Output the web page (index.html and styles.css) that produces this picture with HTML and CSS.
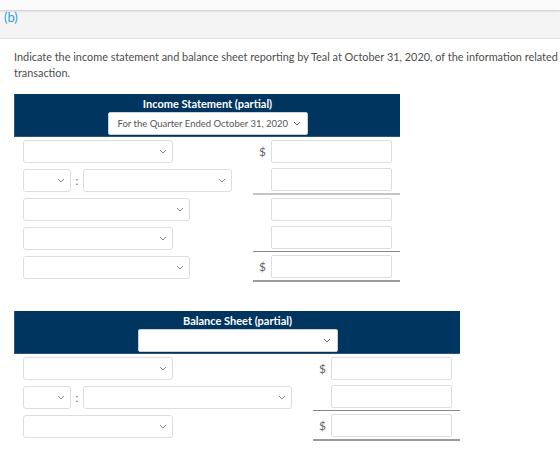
FILE: index.html
```html
<!DOCTYPE html>
<html lang="en">
<head>
    <meta charset="UTF-8">
    <meta name="viewport" content="width=device-width, initial-scale=1.0">
    <title>Part (b)</title>
    <link rel="stylesheet" href="styles.css">
</head>
<body>
    <div class="topbar"></div>
    <div class="part-head">(b)</div>

    <div class="content">
        <p class="question">Indicate the income statement and balance sheet reporting by Teal at October 31, 2020, of the information related to the transaction.</p>

        <!-- income statement -->
        <div class="sheet sheet-income">
            <div class="sheet-head">
                <div class="sheet-title">Income Statement (partial)</div>
                <div class="dd dd-period">
                    <span class="dd-text">For the Quarter Ended October 31, 2020</span>
                    <svg class="chev" width="8" height="5" viewBox="0 0 8 5"><path d="M1 1 L4 4 L7 1" fill="none" stroke="#666" stroke-width="1"/></svg>
                </div>
            </div>

            <div class="row">
                <div class="left">
                    <div class="dd w150"><svg class="chev" width="8" height="5" viewBox="0 0 8 5"><path d="M1 1 L4 4 L7 1" fill="none" stroke="#888" stroke-width="1"/></svg></div>
                </div>
                <div class="amt"><span class="cur">$</span><input type="text" class="num"></div>
            </div>

            <div class="row">
                <div class="left">
                    <div class="dd w48"><svg class="chev" width="8" height="5" viewBox="0 0 8 5"><path d="M1 1 L4 4 L7 1" fill="none" stroke="#888" stroke-width="1"/></svg></div>
                    <span class="colon">:</span>
                    <div class="dd w149"><svg class="chev" width="8" height="5" viewBox="0 0 8 5"><path d="M1 1 L4 4 L7 1" fill="none" stroke="#888" stroke-width="1"/></svg></div>
                </div>
                <div class="amt line-double light"><input type="text" class="num"></div>
            </div>

            <div class="row">
                <div class="left">
                    <div class="dd w167"><svg class="chev" width="8" height="5" viewBox="0 0 8 5"><path d="M1 1 L4 4 L7 1" fill="none" stroke="#888" stroke-width="1"/></svg></div>
                </div>
                <div class="amt"><input type="text" class="num"></div>
            </div>

            <div class="row">
                <div class="left">
                    <div class="dd w150"><svg class="chev" width="8" height="5" viewBox="0 0 8 5"><path d="M1 1 L4 4 L7 1" fill="none" stroke="#888" stroke-width="1"/></svg></div>
                </div>
                <div class="amt line-single"><input type="text" class="num"></div>
            </div>

            <div class="row">
                <div class="left">
                    <div class="dd w167"><svg class="chev" width="8" height="5" viewBox="0 0 8 5"><path d="M1 1 L4 4 L7 1" fill="none" stroke="#888" stroke-width="1"/></svg></div>
                </div>
                <div class="amt line-double"><span class="cur">$</span><input type="text" class="num"></div>
            </div>
        </div>

        <!-- balance sheet -->
        <div class="sheet sheet-balance">
            <div class="sheet-head">
                <div class="sheet-title">Balance Sheet (partial)</div>
                <div class="dd dd-period">
                    <span class="dd-text"></span>
                    <svg class="chev" width="8" height="5" viewBox="0 0 8 5"><path d="M1 1 L4 4 L7 1" fill="none" stroke="#666" stroke-width="1"/></svg>
                </div>
            </div>

            <div class="row">
                <div class="left">
                    <div class="dd w150"><svg class="chev" width="8" height="5" viewBox="0 0 8 5"><path d="M1 1 L4 4 L7 1" fill="none" stroke="#888" stroke-width="1"/></svg></div>
                </div>
                <div class="amt"><span class="cur">$</span><input type="text" class="num"></div>
            </div>

            <div class="row">
                <div class="left">
                    <div class="dd w48"><svg class="chev" width="8" height="5" viewBox="0 0 8 5"><path d="M1 1 L4 4 L7 1" fill="none" stroke="#888" stroke-width="1"/></svg></div>
                    <span class="colon">:</span>
                    <div class="dd w209"><svg class="chev" width="8" height="5" viewBox="0 0 8 5"><path d="M1 1 L4 4 L7 1" fill="none" stroke="#888" stroke-width="1"/></svg></div>
                </div>
                <div class="amt line-single"><input type="text" class="num"></div>
            </div>

            <div class="row">
                <div class="left">
                    <div class="dd w150"><svg class="chev" width="8" height="5" viewBox="0 0 8 5"><path d="M1 1 L4 4 L7 1" fill="none" stroke="#888" stroke-width="1"/></svg></div>
                </div>
                <div class="amt line-double"><span class="cur">$</span><input type="text" class="num"></div>
            </div>
        </div>
    </div>
</body>
</html>
```

FILE: styles.css
```css
html, body {
    overflow: hidden;
}

body {
    margin: 0;
    background: #fff;
    font-family: Lato, "Open Sans", sans-serif;
    color: #4d4d4d;
}

.topbar {
    height: 10px;
    background: #fbfbfb;
    box-shadow: 0 1px 2px rgba(0, 0, 0, 0.18);
    position: relative;
}

.part-head {
    height: 28px;
    padding-left: 4px;
    background: #f4f4f4;
    border-bottom: 1px solid #e4e4e4;
    color: #2f9ee3;
    font-size: 13px;
    line-height: 15px;
}

.content {
    width: 615px;
    padding-left: 14px;
}

.question {
    margin: 10px 0 0;
    font-size: 10.9px;
    line-height: 16px;
}

.sheet {
    margin-top: 13px;
}

.sheet-income {
    width: 386px;
}

.sheet-balance {
    width: 446px;
    margin-top: 29px;
}

.sheet-head {
    background: #00355f;
    border-left: 1px solid #2c5680;
    border-bottom: 1px solid #2c5680;
    padding: 2px 0 1px;
    display: flex;
    flex-direction: column;
    align-items: center;
}

.sheet-title {
    color: #fff;
    font-weight: bold;
    font-size: 11px;
    line-height: 16px;
}

.dd {
    height: 23px;
    box-sizing: border-box;
    border: 1px solid #ddd;
    border-radius: 3px;
    background: #fff;
    display: flex;
    align-items: center;
    justify-content: flex-end;
    padding-right: 5px;
}

.dd-period {
    width: 200px;
    border: 1px solid #c8d0d8;
    border-radius: 2px;
    justify-content: space-between;
    padding-left: 9px;
    padding-right: 6px;
}

.dd-text {
    font-size: 9.5px;
    white-space: nowrap;
    color: #555;
}

.chev {
    display: block;
}

.w48 { width: 48px; }
.w149 { width: 149px; }
.w150 { width: 150px; }
.w167 { width: 167px; }
.w209 { width: 209px; }

.row {
    display: flex;
    justify-content: space-between;
}

.left {
    display: flex;
    align-items: center;
    padding: 3px 0 2px 9px;
}

.colon {
    width: 12px;
    text-align: center;
    font-size: 11px;
    color: #666;
}

.amt {
    width: 147px;
    display: flex;
    justify-content: flex-end;
    align-items: center;
    padding: 3px 8px 2px 0;
    box-sizing: border-box;
}

.line-single {
    border-bottom: 1px solid #888;
}

.line-double {
    border-bottom: 2px solid #9a9a9a;
}

.line-double.light {
    border-bottom-color: #c4c4c4;
}

.cur {
    font-size: 12px;
    color: #666;
    margin-right: 5px;
}

.num {
    width: 121px;
    height: 23px;
    box-sizing: border-box;
    border: 1px solid #ddd;
    border-radius: 2px;
    margin: 0;
    padding: 0 4px;
    font-family: inherit;
}
```
